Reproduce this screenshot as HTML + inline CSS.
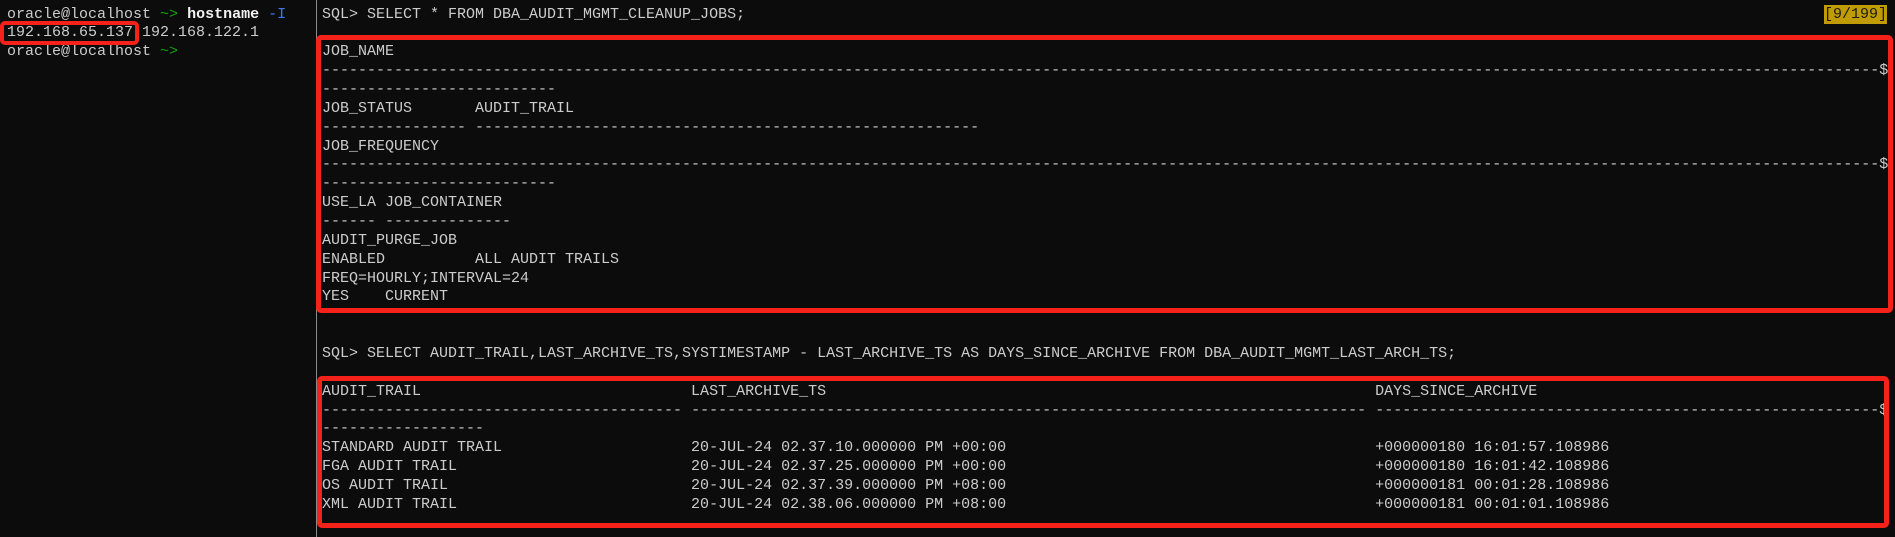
<!DOCTYPE html>
<html><head><meta charset="utf-8"><style>
html,body{margin:0;padding:0;background:#0c0c0c;width:1895px;height:537px;overflow:hidden;position:relative}
pre{margin:0;position:absolute;font-family:"Liberation Mono","DejaVu Sans Mono",monospace;font-size:15px;line-height:18.86px;color:#cccccc;white-space:pre}
.d{display:inline-block;overflow:hidden;vertical-align:top;white-space:pre}
.g{color:#13a10e}.w{color:#f2f2f2;font-weight:bold}.b{color:#3b78ff}
.box{position:absolute;border:5px solid #f5221a;border-radius:5px;box-sizing:border-box}
</style></head><body>
<div style="position:absolute;left:316px;top:0;width:1px;height:537px;background:#8a8a8a"></div>
<pre style="left:7px;top:5.5px">oracle@localhost <span class="g">~&gt;</span> <span class="w">hostname</span> <span class="b">-I</span>
192.168.65.137 192.168.122.1
oracle@localhost <span class="g">~&gt;</span></pre>
<div class="box" style="left:0;top:21px;width:139px;height:24px;border-width:4px"></div>
<pre style="left:322px;top:5.5px">SQL&gt; SELECT * FROM DBA_AUDIT_MGMT_CLEANUP_JOBS;

JOB_NAME
<span class="d" style="width:173ch">--------------------------------------------------------------------------------------------------------------------------------------------------------------------------------------------------------------------------</span>$
<span class="d" style="width:26ch">----------------------------------------</span>
JOB_STATUS       AUDIT_TRAIL
<span class="d" style="width:16ch">------------------------------</span> <span class="d" style="width:56ch">--------------------------------------------------------------------------------</span>
JOB_FREQUENCY
<span class="d" style="width:173ch">--------------------------------------------------------------------------------------------------------------------------------------------------------------------------------------------------------------------------</span>$
<span class="d" style="width:26ch">----------------------------------------</span>
USE_LA JOB_CONTAINER
------ --------------
AUDIT_PURGE_JOB
ENABLED          ALL AUDIT TRAILS
FREQ=HOURLY;INTERVAL=24
YES    CURRENT


SQL&gt; SELECT AUDIT_TRAIL,LAST_ARCHIVE_TS,SYSTIMESTAMP - LAST_ARCHIVE_TS AS DAYS_SINCE_ARCHIVE FROM DBA_AUDIT_MGMT_LAST_ARCH_TS;

AUDIT_TRAIL                              LAST_ARCHIVE_TS                                                             DAYS_SINCE_ARCHIVE
<span class="d" style="width:40ch">------------------------------------------------------------</span> <span class="d" style="width:75ch">----------------------------------------------------------------------------------------------------</span> <span class="d" style="width:56ch">--------------------------------------------------------------------------------</span>$
<span class="d" style="width:18ch">------------------------------</span>
STANDARD AUDIT TRAIL                     20-JUL-24 02.37.10.000000 PM +00:00                                         +000000180 16:01:57.108986
FGA AUDIT TRAIL                          20-JUL-24 02.37.25.000000 PM +00:00                                         +000000180 16:01:42.108986
OS AUDIT TRAIL                           20-JUL-24 02.37.39.000000 PM +08:00                                         +000000181 00:01:28.108986
XML AUDIT TRAIL                          20-JUL-24 02.38.06.000000 PM +08:00                                         +000000181 00:01:01.108986</pre>
<div style="position:absolute;left:1824px;top:5px;width:63px;height:19px;background:#c19c00"></div>
<pre style="left:1824px;top:5px;color:#1a1a1a;line-height:19px">[9/199]</pre>
<div class="box" style="left:316px;top:35px;width:1577px;height:278px"></div>
<div class="box" style="left:317px;top:376px;width:1572px;height:152px"></div>
</body></html>
